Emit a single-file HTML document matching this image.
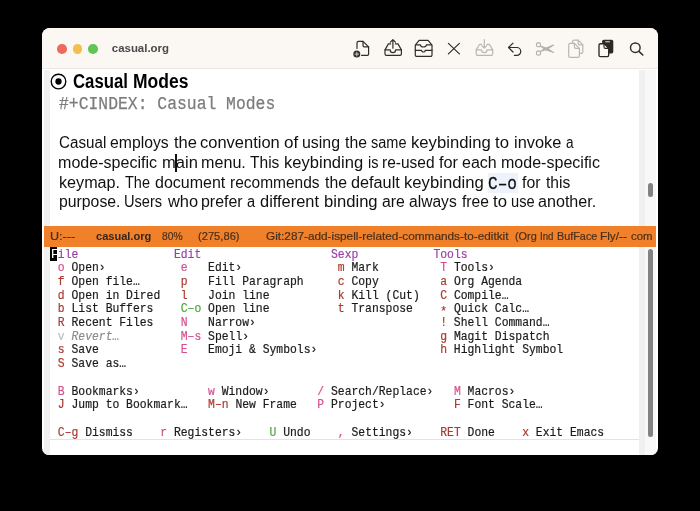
<!DOCTYPE html>
<html>
<head>
<meta charset="utf-8">
<title>casual.org</title>
<style>
html,body{margin:0;padding:0;background:#000;}
body{width:700px;height:511px;position:relative;overflow:hidden;font-family:"Liberation Sans",sans-serif;}
#win{position:absolute;left:42px;top:28px;width:616px;height:426.5px;background:#fff;border-radius:8px 8px 7px 7px;overflow:hidden;will-change:transform;}
#tb{position:absolute;left:0;top:0;width:616px;height:41.1px;background:#fbf8f4;border-bottom:1px solid #ece9e5;box-sizing:border-box;}
.tl{position:absolute;top:16.05px;width:9.7px;height:9.7px;border-radius:50%;}
#title{position:absolute;left:69.8px;top:13.1px;font-size:11.45px;font-weight:bold;color:#4a4a4a;line-height:14px;white-space:pre;}
.ico{position:absolute;top:0;left:0;}
#lfr{position:absolute;left:2.3px;top:41.7px;width:5.5px;height:387px;background:#f0f0f0;}
#rfr{position:absolute;left:596.6px;top:41.7px;width:6.2px;height:387px;background:#f0f0f0;}
#sb{position:absolute;left:602.8px;top:41.7px;width:11px;height:387px;background:#f8f8f8;}
.thumb{position:absolute;left:605.7px;width:5.8px;background:#828282;border-radius:2.9px;}
#ml{position:absolute;left:2.3px;top:197.9px;width:611.5px;height:20.9px;background:#f0812a;}
.mlt{position:absolute;top:201.6px;font-size:10.4px;line-height:14px;color:#48301c;white-space:pre;transform-origin:0 0;-webkit-text-stroke:0.2px;}
.h1{position:absolute;top:41.05px;font-size:19.6px;font-weight:bold;color:#000;line-height:24px;white-space:pre;transform-origin:0 0;}
#bullet{position:absolute;left:8.4px;top:44.6px;}
#cidx{position:absolute;left:16.97px;top:65.6px;font-family:"Liberation Mono",monospace;font-size:17.8px;color:#7c7c7c;line-height:20px;white-space:pre;transform:scaleX(0.9213);transform-origin:0 0;-webkit-text-stroke:0.25px;}
.bl{position:absolute;left:0;width:600px;height:20px;font-size:15.6px;color:#111;line-height:20px;}
.bl span{position:absolute;top:0;white-space:pre;transform-origin:0 0;}
#kbd{position:absolute;left:446px;top:145.4px;width:30px;height:19.8px;background:#edf3fc;}
#kbd span{position:absolute;left:0.1px;top:0.4px;color:#111;font-family:"Liberation Mono",monospace;font-size:19px;line-height:20px;white-space:pre;transform:scaleX(0.848);transform-origin:0 0;-webkit-text-stroke:0.3px;}
#pt{position:absolute;left:133.4px;top:125.8px;width:1.5px;height:18.7px;background:#111;}
#tr{position:absolute;left:9.0px;top:220.5px;-webkit-text-stroke:0.2px;font-family:"Liberation Mono",monospace;font-size:12.4px;line-height:13.715px;color:#1a1a1a;}
#tr div{height:13.715px;white-space:pre;transform:scaleX(0.9183);transform-origin:0 0;}
.hF{color:#fff;}
.ast{position:relative;top:2.6px;}
.h{color:#9c3fa8;}
.p{color:#d4508e;}
.r{color:#aa3a31;}
.g{color:#4aa838;}
.d{color:#bdbdbd;}
.di{color:#8c8c8c;font-style:italic;}
#cur{position:absolute;left:8.3px;top:219.4px;width:6.8px;height:13.2px;background:#000;}
#hl{position:absolute;left:7.8px;top:410.7px;width:589.4px;height:1px;background:#e3e3e3;}
</style>
</head>
<body>
<div id="win">
  <div id="tb">
    <div class="tl" style="left:15.4px;background:#ec6a5e;"></div>
    <div class="tl" style="left:30.55px;background:#f4bf4f;"></div>
    <div class="tl" style="left:46.05px;background:#61c554;"></div>
    <div id="title">casual.org</div>
<!--ICONS-->
  <svg class="ico" width="616" height="40" viewBox="0 0 616 40" fill="none" stroke="#2f2e2d" stroke-width="1.2" stroke-linecap="round" stroke-linejoin="round">
    <!-- 1 doc.badge.plus -->
    <path d="M319.6 27.4H325.2a1.4 1.4 0 0 0 1.4-1.4V18.9L321 13.3H316.4a1.4 1.4 0 0 0-1.4 1.4V20.4"/>
    <path d="M321 13.3V17.5a1.4 1.4 0 0 0 1.4 1.4H326.6"/>
    <circle cx="314.8" cy="26.1" r="3.5" fill="#2f2e2d" stroke="none"/>
    <path d="M314.8 24.3V27.9M313 26.1H316.6" stroke="#cfccc8" stroke-width="1"/>
    <!-- 2 tray.and.arrow.up -->
    <path d="M348.6 15.9H346.4L343 21.9V26a1.4 1.4 0 0 0 1.4 1.4H358a1.4 1.4 0 0 0 1.4-1.4V21.9L356 15.9H353.4"/>
    <path d="M343 21.9H348.2a2.7 2.7 0 0 0 5.4 0H359.4"/>
    <path d="M350.9 20.2V11.8M348.4 14.2L350.9 11.6L353.4 14.2"/>
    <!-- 3 archivebox / tray.2 -->
    <path d="M373.3 17.1L377.1 12.4H386.1L390 17.1V27a1.4 1.4 0 0 1-1.4 1.4H374.7a1.4 1.4 0 0 1-1.4-1.4Z"/>
    <path d="M373.6 16.8H378.4a3 2.2 0 0 0 6 0H389.7"/>
    <path d="M373.3 22.4H379.6a1.8 1.6 0 0 0 3.6 0H390"/>
    <!-- 4 xmark -->
    <path d="M406.4 15.4L417.4 25.9M417.4 15.4L406.4 25.9"/>
    <!-- 5 tray.and.arrow.down (disabled) -->
    <g stroke="#b9b6b3">
    <path d="M439.6 16.3H437.6L434.2 21.9V26a1.4 1.4 0 0 0 1.4 1.4H449.3a1.4 1.4 0 0 0 1.4-1.4V21.9L447.4 16.3H445"/>
    <path d="M434.2 21.9H439.6a2.7 2.7 0 0 0 5.4 0H450.7"/>
    <path d="M442.3 11.6V20M439.8 17.7L442.3 20.2L444.8 17.7"/>
    </g>
    <!-- 6 undo -->
    <path d="M471 15.1L466.5 19.5L471 24"/>
    <path d="M466.8 19.5H474.8a3.95 3.95 0 0 1 0 7.9H472.4"/>
    <!-- 7 scissors (disabled) -->
    <g stroke="#b4b1ae" stroke-width="1.1">
    <circle cx="496.5" cy="16.7" r="2.1"/>
    <circle cx="496.5" cy="25" r="2.1"/>
    <path d="M498.2 18.1L503 21.4L511.6 24.5L504.6 20.2Z" fill="#b4b1ae"/>
    <path d="M498.2 23.6L503 20.4L511.6 17L504.6 21.6Z" fill="#b4b1ae"/>
    </g>
    <!-- 8 doc.on.doc (disabled) -->
    <g stroke="#b9b6b3">
    <path d="M530.6 15.2V13.6a1.4 1.4 0 0 1 1.4-1.4H536.2L540.8 16.8V23.9a1.4 1.4 0 0 1-1.4 1.4H537.6"/>
    <path d="M536.2 12.2V15.4a1.4 1.4 0 0 0 1.4 1.4H540.8"/>
    <path d="M528.1 15.4H532.4L537.4 20.4V27.9a1.4 1.4 0 0 1-1.4 1.4H528.1a1.4 1.4 0 0 1-1.4-1.4V16.8a1.4 1.4 0 0 1 1.4-1.4Z"/>
    <path d="M532.4 15.4V19a1.4 1.4 0 0 0 1.4 1.4H537.4"/>
    </g>
    <!-- 9 doc.on.clipboard.fill -->
    <rect x="560.1" y="11.8" width="11.2" height="13.6" rx="1.7" fill="#2a2928" stroke="none"/>
    <rect x="563.2" y="13.2" width="4.8" height="1.1" rx="0.55" fill="#e9e6e2" stroke="none"/>
    <path d="M558.4 15.7H562L566.7 20.4V27.2a1.4 1.4 0 0 1-1.4 1.4H558.4a1.4 1.4 0 0 1-1.4-1.4V17.1a1.4 1.4 0 0 1 1.4-1.4Z" fill="#faf7f3" stroke="#2a2928" stroke-width="1.35"/>
    <path d="M562 15.7V19a1.4 1.4 0 0 0 1.4 1.4H566.7Z" fill="#f3f0ec" stroke="#2a2928" stroke-width="1.1"/>
    <!-- 10 magnifyingglass -->
    <circle cx="593.3" cy="19.7" r="4.8" stroke-width="1.45"/>
    <path d="M596.9 23.3L600.8 27" stroke-width="1.6"/>
  </svg>
<!--/ICONS-->
  </div>
  <div id="lfr"></div>
  <div id="rfr"></div>
  <div id="sb"></div>
  <div class="thumb" style="top:155.3px;height:13.7px;"></div>
  <div class="thumb" style="top:221.4px;height:188px;"></div>

  <svg id="bullet" width="17" height="17" viewBox="0 0 17 17"><circle cx="8.5" cy="8.5" r="7.3" fill="none" stroke="#000" stroke-width="1.35"/><circle cx="8.5" cy="8.5" r="3.15" fill="#000"/></svg>
  <div class="h1" style="left:31.21px;transform:scaleX(0.8553)">Casual</div><div class="h1" style="left:90.73px;transform:scaleX(0.8923)">Modes</div>
  <div id="cidx">#+CINDEX: Casual Modes</div>

<!--BODY-->
<div class="bl" style="top:105.0px"><span style="left:16.73px;transform:scaleX(0.9738)">Casual</span><span style="left:68.33px;transform:scaleX(1.0112)">employs</span><span style="left:131.95px;transform:scaleX(1.0599)">the</span><span style="left:158.30px;transform:scaleX(1.0572)">convention</span><span style="left:242.29px;transform:scaleX(1.0907)">of</span><span style="left:260.47px;transform:scaleX(1.0205)">using</span><span style="left:303.26px;transform:scaleX(1.0117)">the</span><span style="left:329.10px;transform:scaleX(0.9319)">same</span><span style="left:369.38px;transform:scaleX(1.0685)">keybinding</span><span style="left:453.25px;transform:scaleX(1.0727)">to</span><span style="left:471.90px;transform:scaleX(1.0494)">invoke</span><span style="left:523.92px;transform:scaleX(0.8735)">a</span></div>
<div class="bl" style="top:124.9px"><span style="left:16.33px;transform:scaleX(1.0297)">mode-specific</span><span style="left:119.70px;transform:scaleX(1.0610)">main</span><span style="left:159.43px;transform:scaleX(1.0343)">menu.</span><span style="left:208.15px;transform:scaleX(0.9980)">This</span><span style="left:241.88px;transform:scaleX(1.0616)">keybinding</span><span style="left:325.53px;transform:scaleX(0.9318)">is</span><span style="left:340.47px;transform:scaleX(0.9931)">re-used</span><span style="left:397.27px;transform:scaleX(1.0437)">for</span><span style="left:420.32px;transform:scaleX(1.0264)">each</span><span style="left:458.93px;transform:scaleX(1.0286)">mode-specific</span></div>
<div class="bl" style="top:144.6px"><span style="left:16.91px;transform:scaleX(1.0357)">keymap.</span><span style="left:83.17px;transform:scaleX(0.9289)">The</span><span style="left:112.83px;transform:scaleX(1.0260)">document</span><span style="left:187.97px;transform:scaleX(0.9936)">recommends</span><span style="left:282.76px;transform:scaleX(1.0117)">the</span><span style="left:308.82px;transform:scaleX(1.0419)">default</span><span style="left:362.38px;transform:scaleX(1.0685)">keybinding</span><span style="left:480.28px;transform:scaleX(1.0155)">for</span><span style="left:503.76px;transform:scaleX(1.0010)">this</span></div>
<div class="bl" style="top:164.3px"><span style="left:16.98px;transform:scaleX(1.0124)">purpose.</span><span style="left:82.37px;transform:scaleX(0.9366)">Users</span><span style="left:125.52px;transform:scaleX(1.0541)">who</span><span style="left:159.47px;transform:scaleX(1.0206)">prefer</span><span style="left:205.38px;transform:scaleX(0.9359)">a</span><span style="left:217.81px;transform:scaleX(1.0522)">different</span><span style="left:281.93px;transform:scaleX(1.0662)">binding</span><span style="left:339.83px;transform:scaleX(1.0146)">are</span><span style="left:366.84px;transform:scaleX(1.0009)">always</span><span style="left:419.78px;transform:scaleX(1.0013)">free</span><span style="left:451.25px;transform:scaleX(1.0727)">to</span><span style="left:469.05px;transform:scaleX(0.9383)">use</span><span style="left:496.32px;transform:scaleX(1.0334)">another.</span></div>
<!--/BODY-->
  <div id="kbd"><span>C–o</span></div>
  <div id="pt"></div>

  <div id="ml"></div>
<!--ML-->
  <div class="mlt" style="left:7.73px;transform:scaleX(1.2087);">U:---</div>
  <div class="mlt" style="left:53.57px;transform:scaleX(1.0625);font-weight:bold;color:#33261d;-webkit-text-stroke:0;">casual.org</div>
  <div class="mlt" style="left:119.85px;transform:scaleX(0.9904);">80%</div>
  <div class="mlt" style="left:156.31px;transform:scaleX(1.0735);">(275,86)</div>
  <div class="mlt" style="left:224.41px;transform:scaleX(1.1347);">Git:287-add-ispell-related-commands-to-editkit</div>
  <div class="mlt" style="left:472.92px;transform:scaleX(1.0470);">(Org</div>
  <div class="mlt" style="left:498.10px;transform:scaleX(0.9355);">Ind</div>
  <div class="mlt" style="left:515.11px;transform:scaleX(1.0423);">BufFace</div>
  <div class="mlt" style="left:558.03px;transform:scaleX(1.1358);">Fly/--</div>
  <div class="mlt" style="left:588.52px;transform:scaleX(1.0907);">com</div>
<!--/ML-->

  <div id="cur"></div>
  <div id="tr">
<!--ROWS-->
<div><span class="hF">F</span><span class="h">ile</span>              <span class="h">Edit</span>                   <span class="h">Sexp</span>           <span class="h">Tools</span></div>
<div> <span class="p">o</span> Open›           <span class="p">e</span>   Edit›              <span class="r">m</span> Mark         <span class="p">T</span> Tools›</div>
<div> <span class="r">f</span> Open file…      <span class="r">p</span>   Fill Paragraph     <span class="r">c</span> Copy         <span class="r">a</span> Org Agenda</div>
<div> <span class="r">d</span> Open in Dired   <span class="r">l</span>   Join line          <span class="r">k</span> Kill (Cut)   <span class="r">C</span> Compile…</div>
<div> <span class="r">b</span> List Buffers    <span class="g">C–o</span> Open line          <span class="r">t</span> Transpose    <span class="r ast">*</span> Quick Calc…</div>
<div> <span class="r">R</span> Recent Files    <span class="p">N</span>   Narrow›                           <span class="r">!</span> Shell Command…</div>
<div> <span class="d">v</span> <span class="di">Revert…</span>         <span class="p">M–s</span> Spell›                            <span class="r">g</span> Magit Dispatch</div>
<div> <span class="r">s</span> Save            <span class="p">E</span>   Emoji &amp; Symbols›                  <span class="r">h</span> Highlight Symbol</div>
<div> <span class="r">S</span> Save as…</div>
<div> </div>
<div> <span class="p">B</span> Bookmarks›          <span class="p">w</span> Window›       <span class="p">/</span> Search/Replace›   <span class="p">M</span> Macros›</div>
<div> <span class="r">J</span> Jump to Bookmark…   <span class="r">M–n</span> New Frame   <span class="p">P</span> Project›          <span class="r">F</span> Font Scale…</div>
<div> </div>
<div> <span class="r">C–g</span> Dismiss    <span class="p">r</span> Registers›    <span class="g">U</span> Undo    <span class="p">,</span> Settings›    <span class="r">RET</span> Done    <span class="r">x</span> Exit Emacs</div>
<!--/ROWS-->
  </div>
  <div id="hl"></div>
</div>
</body>
</html>
